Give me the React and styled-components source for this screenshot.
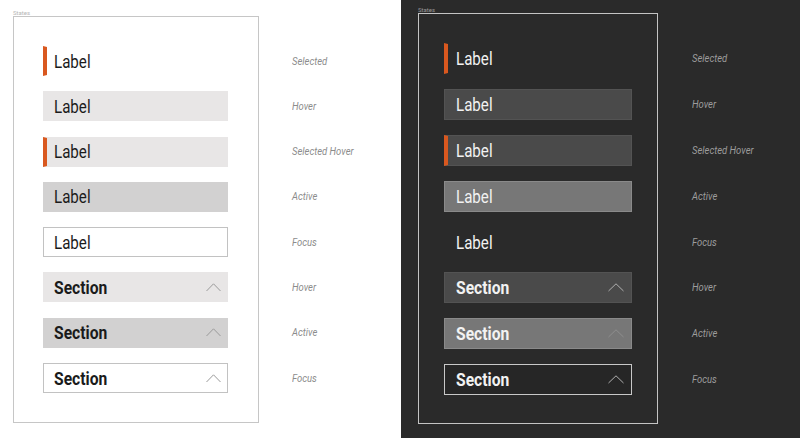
import React from "react";
import styled, { createGlobalStyle, css } from "styled-components";

const GlobalStyle = createGlobalStyle`
  html, body {
    margin: 0;
    padding: 0;
    background: #ffffff;
  }
  * {
    box-sizing: border-box;
  }
`;

// no condensed face is installed, so Roboto gets squeezed a bit (see Squeezed)
const face = `Roboto, "Liberation Sans", sans-serif`;

// sizes taken per panel, the dark one is a little larger
const metrics = {
  light: { padTop: 9, padLeft: 13, frameW: 246, frameH: 407, insetX: 29, insetY: 29, rowW: 185, rowH: 30, gap: 15.3, colGap: 33, textPad: 11 },
  dark: { padTop: 6, padLeft: 17, frameW: 240, frameH: 411, insetX: 25, insetY: 29, rowW: 188, rowH: 31, gap: 14.9, colGap: 34, textPad: 12 },
};

const palette = {
  light: {
    page: "#ffffff",
    caption: "#b5b5b5",
    frame: "#c6c6c6",
    text: "#1b1b1b",
    state: "#8c8c8c",
    chevron: "#9a9a9a",
    hover: { bg: "#e8e6e6", border: "#e8e6e6" },
    active: { bg: "#d2d1d1", border: "#d2d1d1" },
    focus: { bg: "#ffffff", border: "#c2c2c2" },
    focusLabel: { bg: "#ffffff", border: "#c2c2c2" },
  },
  dark: {
    page: "#2a2a2a",
    caption: "#9a9a9a",
    frame: "#c4c4c4",
    text: "#f2f2f2",
    state: "#9c9c9c",
    chevron: "#b0b0b0",
    hover: { bg: "#4a4a4a", border: "#535353" },
    active: { bg: "#777777", border: "#8a8a8a" },
    focus: { bg: "#262626", border: "#c8c8c8" },
    focusLabel: { bg: "transparent", border: "transparent" },
  },
};

const ORANGE = "#d9581f";

const Page = styled.div`
  display: grid;
  grid-template-columns: 401px 1fr;
  width: 800px;
  height: 438px;
  overflow: hidden;
`;

const Panel = styled.section`
  display: flex;
  align-items: flex-start;
  gap: ${(p) => metrics[p.$tone].colGap}px;
  padding: ${(p) => metrics[p.$tone].padTop}px 0 0 ${(p) => metrics[p.$tone].padLeft}px;
  background: ${(p) => palette[p.$tone].page};
`;

const FrameColumn = styled.div`
  display: flex;
  flex-direction: column;
  width: ${(p) => metrics[p.$tone].frameW}px;
`;

const Caption = styled.div`
  font-family: ${face};
  font-size: 6px;
  line-height: 7px;
  height: 7px;
  color: ${(p) => palette[p.$tone].caption};
`;

const Frame = styled.div`
  display: flex;
  flex-direction: column;
  gap: ${(p) => metrics[p.$tone].gap}px;
  height: ${(p) => metrics[p.$tone].frameH}px;
  padding: ${(p) => metrics[p.$tone].insetY}px 0 0 ${(p) => metrics[p.$tone].insetX}px;
  border: 1px solid ${(p) => palette[p.$tone].frame};
`;

const Squeezed = styled.span`
  display: inline-block;
  white-space: nowrap;
  transform: scaleX(${(p) => p.$scale || 0.85});
  transform-origin: left center;
`;

const variantStyle = ({ $tone, $state, $section }) => {
  const c = palette[$tone];
  const m = metrics[$tone];
  if ($state === "selected" || $state === "selectedHover") {
    return css`
      background: ${$state === "selectedHover" ? c.hover.bg : "transparent"};
      border: 1px solid ${$state === "selectedHover" ? c.hover.border : "transparent"};
      border-left: 4px solid ${ORANGE};
      padding-left: ${m.textPad - 4}px;
    `;
  }
  const look = $state === "focus" && !$section ? c.focusLabel : c[$state];
  return css`
    background: ${look.bg};
    border: 1px solid ${look.border};
    padding-left: ${m.textPad - 1}px;
  `;
};

const Item = styled.div`
  display: flex;
  align-items: center;
  justify-content: space-between;
  width: ${(p) => metrics[p.$tone].rowW}px;
  height: ${(p) => metrics[p.$tone].rowH}px;
  padding-right: ${(p) => (p.$tone === "dark" ? 7 : 6)}px;
  font-family: ${face};
  font-size: 18px;
  font-weight: ${(p) => (p.$section ? 700 : 400)};
  color: ${(p) => palette[p.$tone].text};
  ${variantStyle}
`;

const ChevronMark = styled.svg`
  width: ${(p) => (p.$tone === "dark" ? 16 : 15)}px;
  height: 9px;
  flex: none;
  polyline {
    fill: none;
    stroke: ${(p) => (p.$faint ? "#8e8e8e" : palette[p.$tone].chevron)};
    stroke-width: 1;
  }
`;

const StateColumn = styled.div`
  display: flex;
  flex-direction: column;
  gap: ${(p) => metrics[p.$tone].gap}px;
  padding-top: ${(p) => 7 + 1 + metrics[p.$tone].insetY}px;
`;

const StateLabel = styled.div`
  display: flex;
  align-items: center;
  height: ${(p) => metrics[p.$tone].rowH}px;
  font-family: ${face};
  font-style: italic;
  font-size: 11px;
  color: ${(p) => palette[p.$tone].state};
`;

const rows = [
  { text: "Label", state: "selected", name: "Selected" },
  { text: "Label", state: "hover", name: "Hover" },
  { text: "Label", state: "selectedHover", name: "Selected Hover" },
  { text: "Label", state: "active", name: "Active" },
  { text: "Label", state: "focus", name: "Focus" },
  { text: "Section", state: "hover", name: "Hover", section: true },
  { text: "Section", state: "active", name: "Active", section: true },
  { text: "Section", state: "focus", name: "Focus", section: true },
];

function Chevron({ tone, faint }) {
  const w = tone === "dark" ? 16 : 15;
  return (
    <ChevronMark $tone={tone} $faint={faint} viewBox={`0 0 ${w} 9`}>
      <polyline points={`0.5,8 ${w / 2},0.8 ${w - 0.5},8`} />
    </ChevronMark>
  );
}

function StatesPanel({ tone }) {
  return (
    <Panel $tone={tone}>
      <FrameColumn $tone={tone}>
        <Caption $tone={tone}>States</Caption>
        <Frame $tone={tone}>
          {rows.map((row, index) => (
            <Item
              key={`item-${index}`}
              $tone={tone}
              $state={row.state}
              $section={row.section}
            >
              <Squeezed $scale={row.section ? 0.87 : 0.84}>{row.text}</Squeezed>
              {row.section && (
                <Chevron tone={tone} faint={tone === "dark" && row.state === "active"} />
              )}
            </Item>
          ))}
        </Frame>
      </FrameColumn>
      <StateColumn $tone={tone}>
        {rows.map((row, index) => (
          <StateLabel key={`state-${index}`} $tone={tone}>
            <Squeezed $scale={0.86}>{row.name}</Squeezed>
          </StateLabel>
        ))}
      </StateColumn>
    </Panel>
  );
}

export default function App() {
  return (
    <>
      <GlobalStyle />
      <Page>
        <StatesPanel tone="light" />
        <StatesPanel tone="dark" />
      </Page>
    </>
  );
}
